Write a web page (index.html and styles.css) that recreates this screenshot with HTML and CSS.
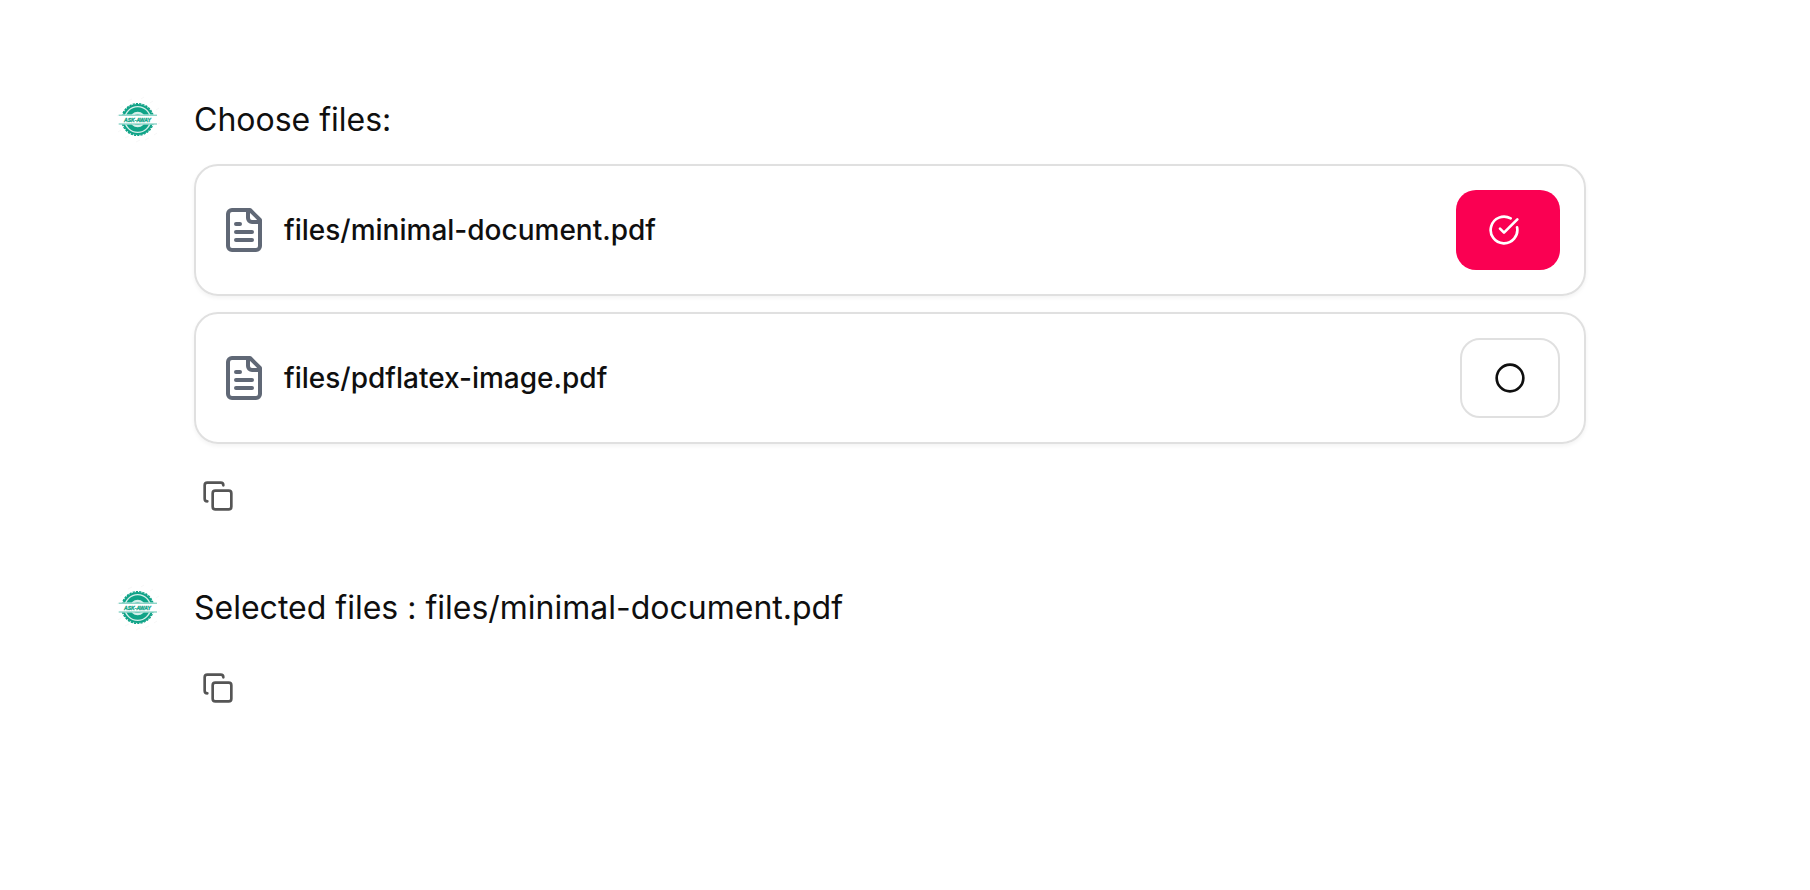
FILE: index.html
```html
<!DOCTYPE html>
<html lang="en">
<head>
<meta charset="utf-8">
<title>Ask-Away</title>
<link rel="stylesheet" href="styles.css">
</head>
<body>
<svg class="sprite" aria-hidden="true">
  <symbol id="logo" viewBox="0 0 48 48">
    <path class="logo-mist" d="M6 12l3-2M14 5l4-2M27 3l3-2M36 7l3-2M42 14l3-2M3 20l2-1M4 36l3-2M11 42l4-2M22 46l4-2M31 44l4-2M40 39l3-2M44 28l2-1"/>
    <circle class="logo-rim" cx="23.700" cy="23.500" r="14.600"/>
    <circle class="logo-teeth" cx="23.700" cy="23.500" r="15.900"/>
    <circle class="logo-ring" cx="23.700" cy="23.500" r="10"/>
    <circle class="logo-core" cx="23.700" cy="23.500" r="5.600"/>
    <path class="logo-band" d="M5 18.500h38v10H5z"/>
    <path class="logo-rule" d="M4.700 19.200h38.300M4.700 28h38.300"/>
  </symbol>
  <symbol id="file-text" viewBox="0 0 24 24">
    <path d="M15 2H6a2 2 0 0 0-2 2v16a2 2 0 0 0 2 2h12a2 2 0 0 0 2-2V7Z"/>
    <path d="M14 2v4a2 2 0 0 0 2 2h4M10 9H8M16 13H8M16 17H8"/>
  </symbol>
  <symbol id="circle-check" viewBox="0 0 24 24">
    <path d="M21.801 10A10 10 0 1 1 17 3.335"/>
    <path d="m9 11 3 3L22 4"/>
  </symbol>
  <symbol id="circle" viewBox="0 0 24 24"><circle cx="12" cy="12" r="10"/></symbol>
  <symbol id="copy" viewBox="0 0 24 24">
    <rect width="14" height="14" x="8" y="8" rx="2"/>
    <path d="M4 16c-1.100 0-2-.9-2-2V4c0-1.100.9-2 2-2h10c1.100 0 2 .9 2 2"/>
  </symbol>
</svg>
<main class="thread">
  <article class="message">
    <svg class="avatar" viewBox="0 0 48 48"><use href="#logo"/><text class="logo-text" x="10" y="25.800" textLength="27" lengthAdjust="spacingAndGlyphs">ASK-AWAY</text></svg>
    <div class="content">
      <p class="text">Choose files:</p>
      <div class="files">
        <div class="card">
          <svg class="icon file-icon"><use href="#file-text"/></svg>
          <span class="name">files/minimal-document.pdf</span>
          <button class="toggle selected" aria-label="Deselect"><svg class="icon"><use href="#circle-check"/></svg></button>
        </div>
        <div class="card">
          <svg class="icon file-icon"><use href="#file-text"/></svg>
          <span class="name">files/pdflatex-image.pdf</span>
          <button class="toggle" aria-label="Select"><svg class="icon"><use href="#circle"/></svg></button>
        </div>
      </div>
      <button class="copy after-files" aria-label="Copy"><svg class="icon"><use href="#copy"/></svg></button>
    </div>
  </article>
  <article class="message">
    <svg class="avatar" viewBox="0 0 48 48"><use href="#logo"/><text class="logo-text" x="10" y="25.800" textLength="27" lengthAdjust="spacingAndGlyphs">ASK-AWAY</text></svg>
    <div class="content">
      <p class="text">Selected files : files/minimal-document.pdf</p>
      <button class="copy" aria-label="Copy"><svg class="icon"><use href="#copy"/></svg></button>
    </div>
  </article>
</main>
</body>
</html>
```
FILE: styles.css
```css
* { box-sizing: border-box; }
body {
  margin: 0;
  background: #fff;
  color: #0f0f0f;
  font-family: Inter, "Liberation Sans", sans-serif;
}
.sprite { position: absolute; width: 0; height: 0; }
.thread {
  display: flex;
  flex-direction: column;
  gap: 64px;
  padding: 96px 224px 0 114px;
}
.message { display: flex; align-items: flex-start; gap: 32px; }
.avatar { width: 48px; height: 48px; flex: none; }
.content { display: flex; flex-direction: column; flex: 1; align-items: stretch; }
.text { margin: 0; font-size: 32px; line-height: 48px; }
.files { display: flex; flex-direction: column; gap: 16px; margin-top: 20px; }
.card {
  display: flex;
  align-items: center;
  height: 132px;
  padding: 24px;
  border: 2px solid #e0e0e0;
  border-radius: 24px;
  box-shadow: 0 2px 4px rgba(0, 0, 0, .05);
}
.icon {
  display: block;
  width: 32px;
  height: 32px;
  fill: none;
  stroke: currentColor;
  stroke-width: 2;
  stroke-linecap: round;
  stroke-linejoin: round;
}
.file-icon { width: 48px; height: 48px; color: #606876; }
.name { flex: 1; margin-left: 16px; font-size: 28px; line-height: 40px; font-weight: 500; }
.toggle {
  height: 80px;
  padding: 0 32px;
  border: 2px solid #e0e0e0;
  border-radius: 20px;
  background: #fff;
  color: #0f0f0f;
}
.selected { padding-right: 40px; border: 0; background: #fa0052; color: #fff; }
.copy {
  align-self: flex-start;
  margin-top: 32px;
  padding: 8px;
  border: 0;
  background: none;
  color: #555;
}
.after-files { margin-top: 28px; }
.logo-mist { fill: none; stroke: #f1f1f1; stroke-width: .6; }
.logo-rim { fill: #d5efea; stroke: #0fa387; stroke-width: 2; }
.logo-teeth { fill: none; stroke: #0fa387; stroke-width: 1.4; stroke-dasharray: 2.2 1.1; }
.logo-ring { fill: #d5efea; stroke: #0fa387; stroke-width: 4.4; }
.logo-core { fill: #0fa387; }
.logo-band { fill: #fff; }
.logo-rule { fill: none; stroke: #5cc2b0; stroke-width: 1; }
.logo-text {
  fill: #0fa387;
  stroke: #0fa387;
  stroke-width: .35;
  font: italic 700 6.2px "Liberation Sans", sans-serif;
}
```
